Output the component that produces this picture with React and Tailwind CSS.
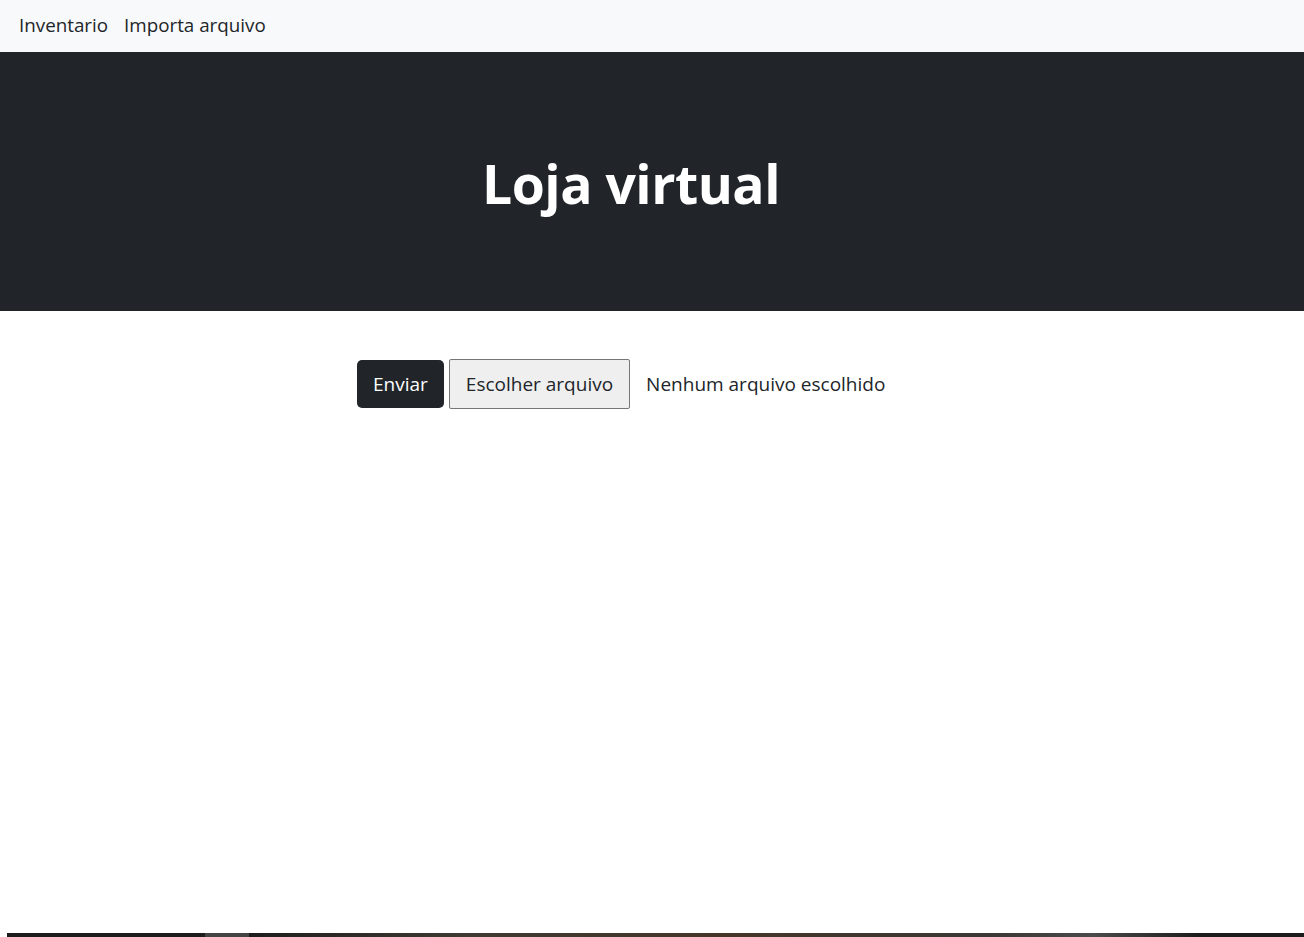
export default function App() {
  const font = { fontFamily: '"Open Sans", "Noto Sans", sans-serif' };
  return (
    <div className="w-full h-[937px] flex flex-col bg-white text-[#212529] font-['Open_Sans',sans-serif]" style={font}>
      <nav className="h-[52px] bg-[#f8f9fa] flex items-center pl-[19px] pb-[2px] gap-[16px] text-[18.8px]">
        <a className="cursor-pointer">Inventario</a>
        <a className="cursor-pointer">Importa arquivo</a>
      </nav>
      <header className="h-[259px] bg-[#212529] flex items-center justify-center pr-[42px]">
        <h1 className="text-white text-[53.5px] font-bold tracking-[-0.5px] leading-none pt-[4px]">Loja virtual</h1>
      </header>
      <main className="flex-1 pt-[48px] pl-[357px]">
        <form className="flex items-center">
          <button type="button" className="h-[48px] px-[16px] rounded-[5px] bg-[#212529] text-white text-[19px]">
            Enviar
          </button>
          <label className="ml-[5px] flex items-center cursor-pointer">
            <span className="h-[50px] px-[16px] flex items-center bg-[#efefef] border border-[#767676] rounded-[2px] text-[19px]">
              Escolher arquivo
            </span>
            <span className="ml-[16px] text-[19px]">Nenhum arquivo escolhido</span>
          </label>
        </form>
      </main>
      <div className="h-[4px] ml-[7px] flex">
        <div className="w-[198px] bg-[#1c1c1c]" />
        <div className="w-[44px] bg-[#444444]" />
        <div className="w-[3px] bg-[#1c1c1c]" />
        <div className="flex-1 bg-[linear-gradient(90deg,#1e1e1e_0%,#3e3a33_20%,#463628_45%,#3a3836_70%,#4a4a4a_80%,#1c1c1c_90%,#1c1c1c_100%)]" />
      </div>
    </div>
  );
}
